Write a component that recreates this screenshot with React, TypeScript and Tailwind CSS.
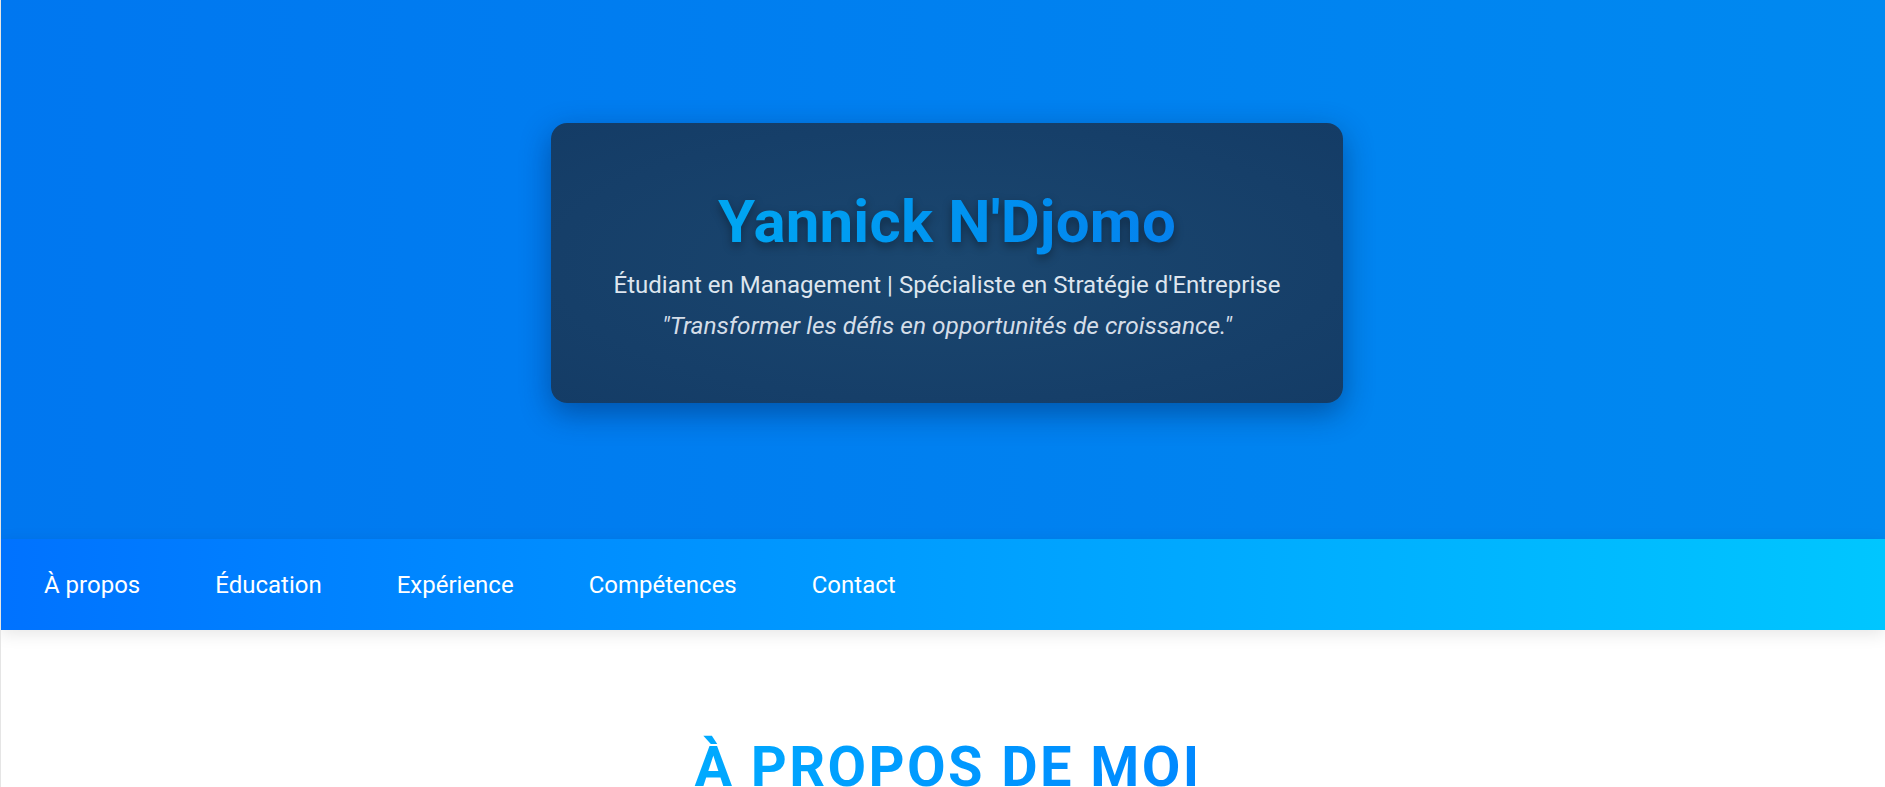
import React from 'react';

const navLinks = ['À propos', 'Éducation', 'Expérience', 'Compétences', 'Contact'];

export default function App() {
  return (
    <div className="min-h-screen bg-white border-l border-black/10 font-['Roboto',sans-serif] overflow-hidden">
      {/* Hero */}
      <header className="h-[539px] bg-gradient-to-r from-[#0077f0] to-[#0089f0] flex items-center justify-center pb-[13px] pl-[8px]">
        <div className="w-[792px] h-[280px] rounded-2xl bg-[radial-gradient(ellipse_at_center,#1b476f_0%,#163f69_70%,#143c66_100%)] shadow-[0_10px_30px_rgba(0,30,80,0.45)] flex flex-col items-center pt-[63px]">
          <h1 className="text-[60px] leading-[72px] font-bold tracking-[0.2px] bg-gradient-to-r from-[#00a6f2] to-[#0582ee] bg-clip-text text-transparent drop-shadow-[0_4px_5px_rgba(0,0,0,0.35)]">
            Yannick N'Djomo
          </h1>
          <p className="mt-[11px] text-[24px] leading-[32px] text-[#dde5ee]">
            Étudiant en Management | Spécialiste en Stratégie d'Entreprise
          </p>
          <p className="mt-[9px] text-[24.5px] leading-[32px] italic text-[#d4dde8]">
            "Transformer les défis en opportunités de croissance."
          </p>
        </div>
      </header>

      {/* Navigation */}
      <nav className="relative z-10 h-[91px] bg-gradient-to-r from-[#0072ff] to-[#00c6ff] shadow-[0_4px_16px_rgba(0,0,0,0.1)] flex items-center pl-[43px] gap-[75px]">
        {navLinks.map((link) => (
          <a key={link} href="#" className="text-white text-[24px] leading-none">
            {link}
          </a>
        ))}
      </nav>

      {/* About */}
      <section className="pt-[105px] pl-[10px] text-center">
        <h2 className="inline-block text-[56px] leading-[64px] font-bold tracking-[2.4px] bg-gradient-to-r from-[#00aaff] to-[#0088ff] bg-clip-text text-transparent">
          À PROPOS DE MOI
        </h2>
      </section>
    </div>
  );
}
